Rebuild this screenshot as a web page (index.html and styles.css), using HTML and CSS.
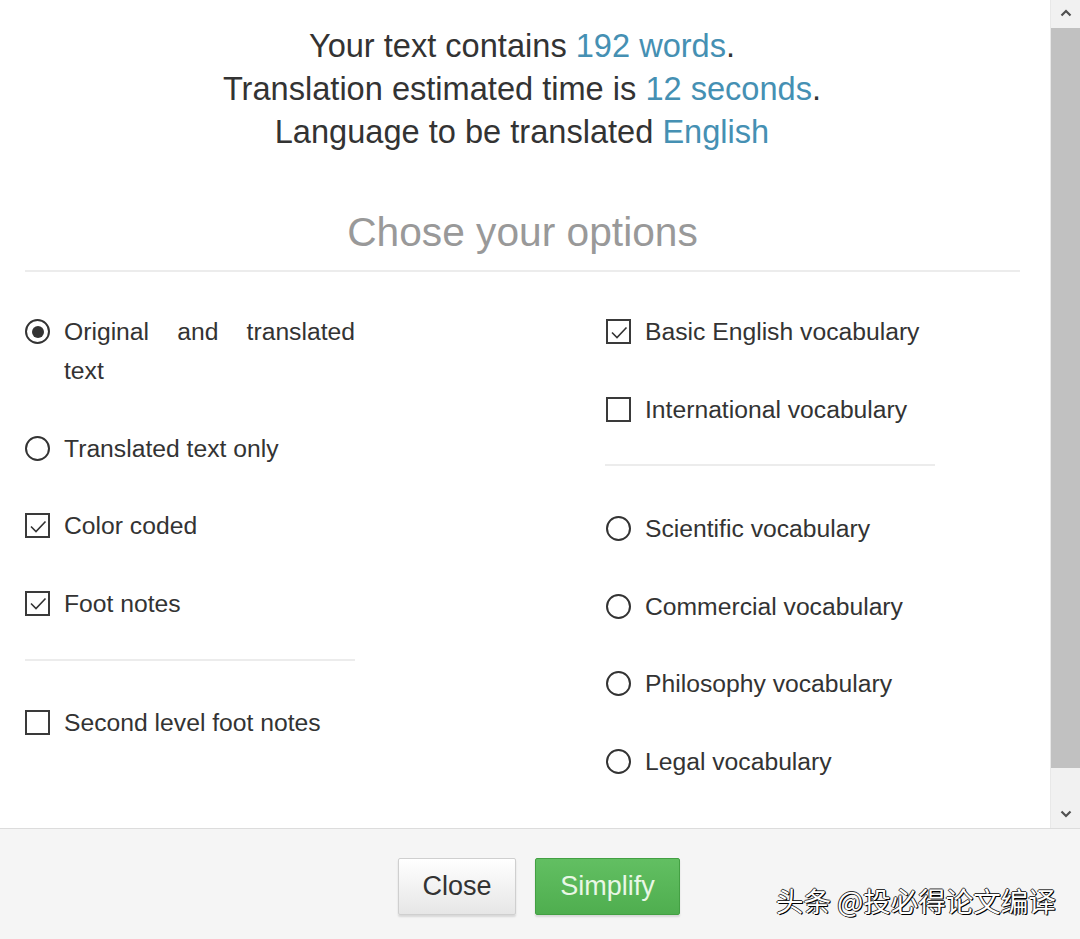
FILE: index.html
```html
<!DOCTYPE html>
<html>
<head>
<meta charset="utf-8">
<link rel="stylesheet" href="styles.css">
</head>
<body>
<div class="window">
  <div class="top">
    <div class="content">
      <div class="summary">
        <div>Your text contains <span class="hl">192 words</span>.</div>
        <div>Translation estimated time is <span class="hl">12 seconds</span>.</div>
        <div>Language to be translated <span class="hl">English</span></div>
      </div>
      <h2 class="heading">Chose your options</h2>
      <div class="cols">
        <div class="col">
          <div class="opt"><span class="radio on"></span><span class="label just">Original and translated text</span></div>
          <div class="opt"><span class="radio"></span><span class="label">Translated text only</span></div>
          <div class="opt"><span class="check on"><svg viewBox="0 0 24 24" width="24" height="24"><polyline points="5,12.5 10,17.5 19.5,7.5" fill="none" stroke="#333" stroke-width="1.6"/></svg></span><span class="label">Color coded</span></div>
          <div class="opt"><span class="check on"><svg viewBox="0 0 24 24" width="24" height="24"><polyline points="5,12.5 10,17.5 19.5,7.5" fill="none" stroke="#333" stroke-width="1.6"/></svg></span><span class="label">Foot notes</span></div>
          <hr class="sep sep-l">
          <div class="opt"><span class="check"></span><span class="label">Second level foot notes</span></div>
        </div>
        <div class="col">
          <div class="opt"><span class="check on"><svg viewBox="0 0 24 24" width="24" height="24"><polyline points="5,12.5 10,17.5 19.5,7.5" fill="none" stroke="#333" stroke-width="1.6"/></svg></span><span class="label">Basic English vocabulary</span></div>
          <div class="opt"><span class="check"></span><span class="label">International vocabulary</span></div>
          <hr class="sep sep-r">
          <div class="opt"><span class="radio"></span><span class="label">Scientific vocabulary</span></div>
          <div class="opt"><span class="radio"></span><span class="label">Commercial vocabulary</span></div>
          <div class="opt"><span class="radio"></span><span class="label">Philosophy vocabulary</span></div>
          <div class="opt"><span class="radio"></span><span class="label">Legal vocabulary</span></div>
        </div>
      </div>
    </div>
    <div class="scrollbar">
      <div class="sb-btn sb-up"><svg viewBox="0 0 12 8" width="12" height="8"><polyline points="1.5,6.5 6,2 10.5,6.5" fill="none" stroke="#505050" stroke-width="2.2"/></svg></div>
      <div class="sb-thumb"></div>
      <div class="sb-track"></div>
      <div class="sb-btn sb-down"><svg viewBox="0 0 12 8" width="12" height="8"><polyline points="1.5,1.5 6,6 10.5,1.5" fill="none" stroke="#505050" stroke-width="2.2"/></svg></div>
    </div>
  </div>
  <div class="footer">
    <button class="btn btn-close">Close</button>
    <button class="btn btn-go">Simplify</button>
    <div class="watermark">头条 @投必得论文编译</div>
  </div>
</div>
</body>
</html>
```
FILE: styles.css
```css
html, body {
  margin: 0;
  padding: 0;
  background: #fff;
}
body {
  font-family: "Liberation Sans", Arial, sans-serif;
  color: #333;
}
.window {
  width: 1080px;
  height: 939px;
  display: flex;
  flex-direction: column;
  overflow: hidden;
}
.top {
  height: 828px;
  display: flex;
}
.content {
  width: 1050px;
  box-sizing: border-box;
  padding: 24px 30px 0 25px;
}
.summary {
  text-align: center;
  font-size: 32.6px;
  line-height: 43px;
  color: #333;
  padding-right: 1px;
}
.hl {
  color: #4590b3;
}
.heading {
  margin: 55px 0 0 0;
  padding-bottom: 14px;
  border-bottom: 2px solid #ececec;
  text-align: center;
  font-weight: normal;
  font-size: 40.7px;
  line-height: 48px;
  color: #999;
}
.cols {
  display: grid;
  grid-template-columns: 330px 330px;
  column-gap: 251px;
  margin-top: 40px;
}
.opt {
  display: flex;
  align-items: flex-start;
  font-size: 24.7px;
  line-height: 39px;
  margin-bottom: 38.5px;
}
.label {
  flex: 1;
  margin-left: 14px;
}
.just {
  text-align: justify;
  text-align-last: left;
}
.radio, .check {
  flex: none;
  box-sizing: border-box;
  margin-top: 7px;
  width: 25px;
  height: 25px;
  border: 2px solid #333;
  position: relative;
}
.radio {
  border-radius: 50%;
}
.radio.on::after {
  content: "";
  position: absolute;
  left: 4.5px;
  top: 4.5px;
  width: 12px;
  height: 12px;
  border-radius: 50%;
  background: #333;
}
.check {
  border-color: #3a3a3a;
}
.check svg {
  position: absolute;
  left: -1.5px;
  top: -1.5px;
}
.sep {
  border: 0;
  height: 2px;
  background: #ececec;
  margin: 0;
}
.sep-l {
  margin-top: -2px;
  margin-bottom: 42px;
}
.sep-r {
  margin-top: -3px;
  margin-bottom: 43px;
  width: 330px;
  margin-left: -1px;
}
.scrollbar {
  width: 30px;
  display: flex;
  flex-direction: column;
  background: #f1f1f1;
  border-left: 1px solid #e8e8e8;
  box-sizing: border-box;
}
.sb-btn {
  height: 28px;
  display: flex;
  align-items: center;
  justify-content: center;
}
.sb-up {
  align-items: flex-start;
  padding-top: 9px;
  box-sizing: border-box;
}
.sb-thumb {
  height: 740px;
  background: #c1c1c1;
}
.sb-track {
  flex: 1;
}
.footer {
  flex: 1;
  background: #f5f5f5;
  border-top: 1px solid #dcdcdc;
  display: flex;
  align-items: center;
  justify-content: center;
  gap: 19px;
  position: relative;
  padding-top: 4px;
}
.btn {
  font-family: "Liberation Sans", Arial, sans-serif;
  font-size: 27px;
  height: 57px;
  box-sizing: border-box;
  border-radius: 2px;
  cursor: pointer;
  margin-left: 0;
}
.btn-close {
  width: 118px;
  color: #333;
  background: linear-gradient(#ffffff, #e6e6e6);
  border: 1px solid #cfcfcf;
  box-shadow: 0 2px 2px rgba(0,0,0,0.12);
  margin-left: -2px;
}
.btn-go {
  width: 145px;
  color: #e9f7e6;
  background: linear-gradient(#62bf62, #4fae4f);
  border: 1px solid #43a043;
  box-shadow: 0 2px 2px rgba(0,0,0,0.12);
}
.watermark {
  position: absolute;
  left: 776px;
  top: 53px;
  font-family: "Noto Sans CJK SC", sans-serif;
  font-size: 27.5px;
  line-height: 36px;
  color: #fff;
  text-shadow: 1px 1px 0 #000, -1px 0 0 #333, 0 -1px 0 #333, 1px 0 0 #111;
  white-space: nowrap;
}
```
